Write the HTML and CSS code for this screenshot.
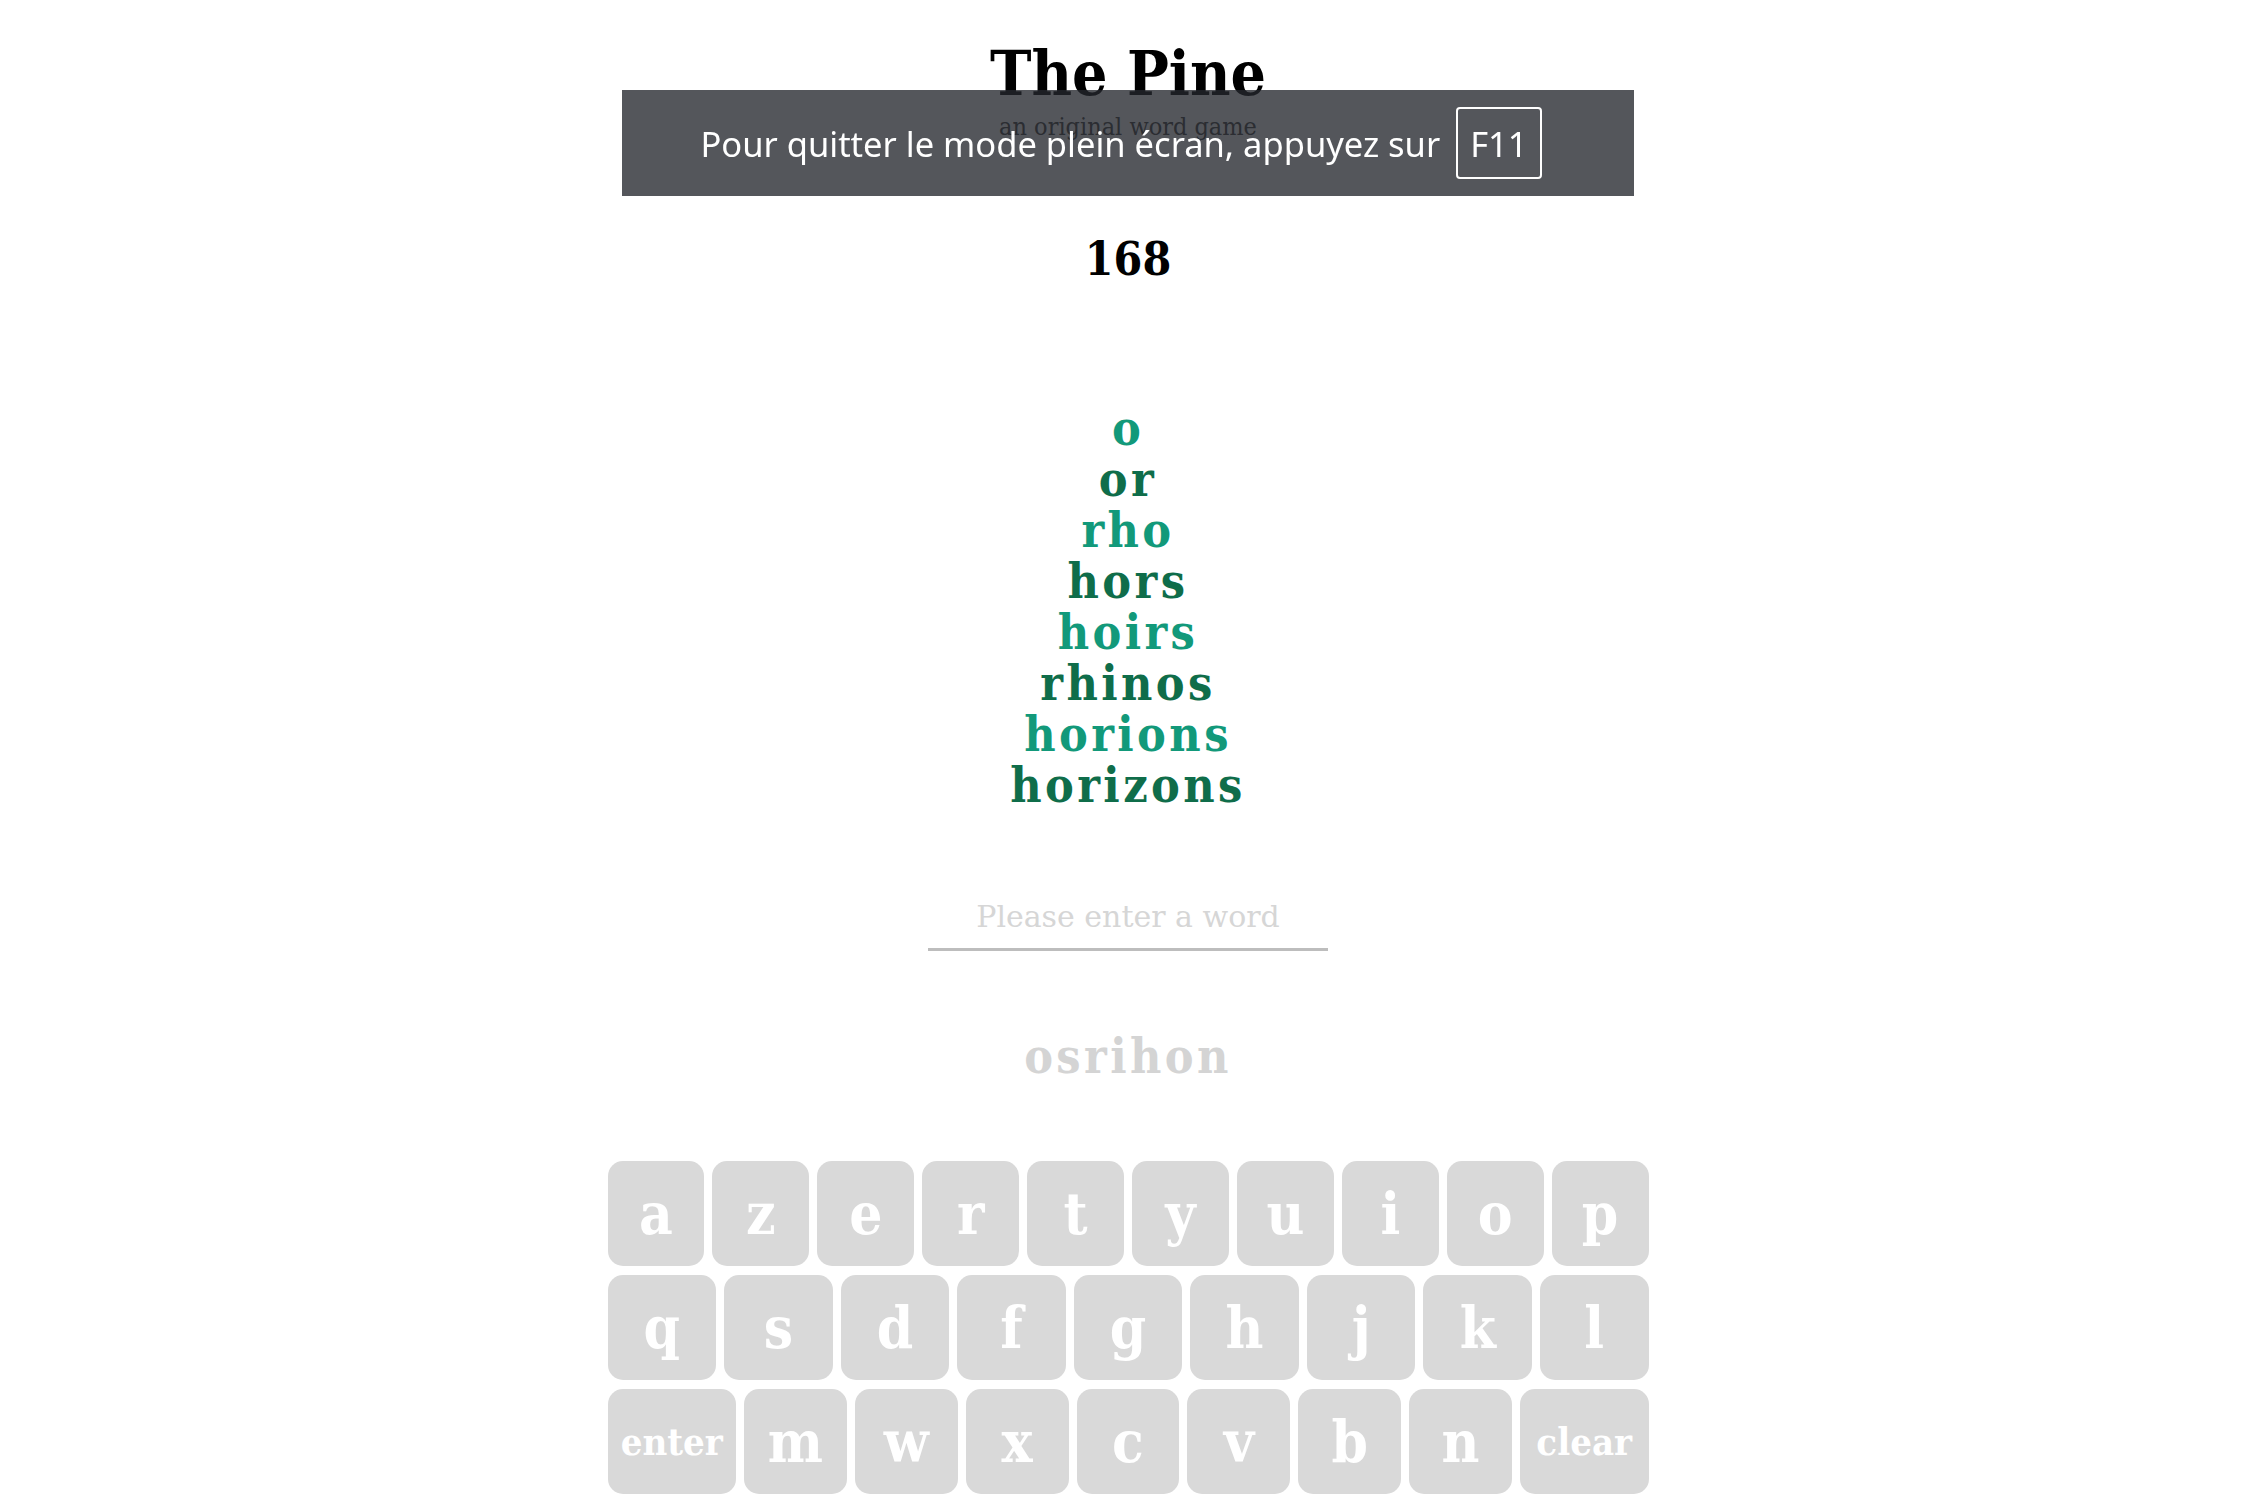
FILE: index.html
```html
<!DOCTYPE html>
<html lang="en">
<head>
<meta charset="utf-8">
<title>The Pine</title>
<link rel="stylesheet" href="styles.css">
</head>
<body>
<main class="page">
  <h1 class="title">The Pine</h1>
  <p class="subtitle">an original word game</p>
  <div class="score">168</div>
  <ol class="tree">
    <li class="light">o</li>
    <li class="dark">or</li>
    <li class="light">rho</li>
    <li class="dark">hors</li>
    <li class="light">hoirs</li>
    <li class="dark">rhinos</li>
    <li class="light">horions</li>
    <li class="dark">horizons</li>
  </ol>
  <input class="word-input" type="text" placeholder="Please enter a word">
  <div class="letters">osrihon</div>
  <div class="keyboard">
    <div class="row">
      <button class="key">a</button><button class="key">z</button><button class="key">e</button><button class="key">r</button><button class="key">t</button><button class="key">y</button><button class="key">u</button><button class="key">i</button><button class="key">o</button><button class="key">p</button>
    </div>
    <div class="row">
      <button class="key">q</button><button class="key">s</button><button class="key">d</button><button class="key">f</button><button class="key">g</button><button class="key">h</button><button class="key">j</button><button class="key">k</button><button class="key">l</button>
    </div>
    <div class="row">
      <button class="key key-wide">enter</button><button class="key">m</button><button class="key">w</button><button class="key">x</button><button class="key">c</button><button class="key">v</button><button class="key">b</button><button class="key">n</button><button class="key key-wide">clear</button>
    </div>
  </div>
</main>
<div class="toast">
  <span class="toast-text">Pour quitter le mode plein écran, appuyez sur</span>
  <span class="toast-key">F11</span>
</div>
</body>
</html>
```

FILE: styles.css
```css
html, body {
  margin: 0;
  padding: 0;
  background: #ffffff;
}

body {
  font-family: "DejaVu Serif", serif;
  font-stretch: condensed;
  color: #000;
}

.page {
  display: flex;
  flex-direction: column;
  align-items: center;
}

.title {
  margin: 43px 0 0;
  font-size: 62px;
  line-height: 1;
  font-weight: 700;
  color: #000;
}

.subtitle {
  margin: 9px 0 0;
  font-size: 25px;
  line-height: 1;
  color: #444;
}

.score {
  margin-top: 97px;
  font-size: 46px;
  line-height: 1;
  font-weight: 700;
}

.tree {
  list-style: none;
  margin: 121px 0 0;
  padding: 0;
  text-align: center;
  font-size: 48px;
  line-height: 51px;
  font-weight: 700;
  letter-spacing: 3.4px;
}

.tree .light { color: #12997a; }
.tree .dark { color: #0f6d4a; }

.word-input {
  margin-top: 74px;
  width: 400px;
  height: 63px;
  padding: 0;
  box-sizing: content-box;
  border: 0;
  border-bottom: 3px solid #bdbdbd;
  outline: none;
  background: transparent;
  font-family: "DejaVu Serif", serif;
  font-stretch: normal;
  font-size: 30px;
  text-align: center;
  color: #333;
}

.word-input::placeholder {
  color: #d6d6d6;
}

.letters {
  margin-top: 80px;
  font-size: 48px;
  line-height: 51px;
  font-weight: 700;
  letter-spacing: 3.4px;
  color: #d4d4d4;
}

.keyboard {
  margin-top: 79px;
  width: 1041px;
  display: flex;
  flex-direction: column;
  gap: 9px;
}

.row {
  display: flex;
  gap: 8px;
}

.key {
  flex: 1 1 0;
  height: 105px;
  border: 0;
  border-radius: 15px;
  background: #d9d9d9;
  color: #ffffff;
  font-family: "DejaVu Serif", serif;
  font-stretch: condensed;
  font-size: 58px;
  font-weight: 700;
  padding: 0;
  display: flex;
  align-items: center;
  justify-content: center;
}

.key-wide {
  flex-grow: 1.25;
  font-size: 38px;
}

.toast {
  position: fixed;
  top: 90px;
  left: 50%;
  transform: translateX(-50%);
  width: 1012px;
  height: 106px;
  box-sizing: border-box;
  padding-right: 14px;
  background: rgba(36, 38, 45, 0.78);
  display: flex;
  align-items: center;
  justify-content: center;
  gap: 16px;
  font-family: "Noto Sans", sans-serif;
  font-stretch: normal;
  font-size: 34.5px;
  color: #ffffff;
}

.toast-key {
  height: 68px;
  padding: 0 12px;
  border: 2px solid #ffffff;
  border-radius: 4px;
  display: flex;
  align-items: center;
}
```
